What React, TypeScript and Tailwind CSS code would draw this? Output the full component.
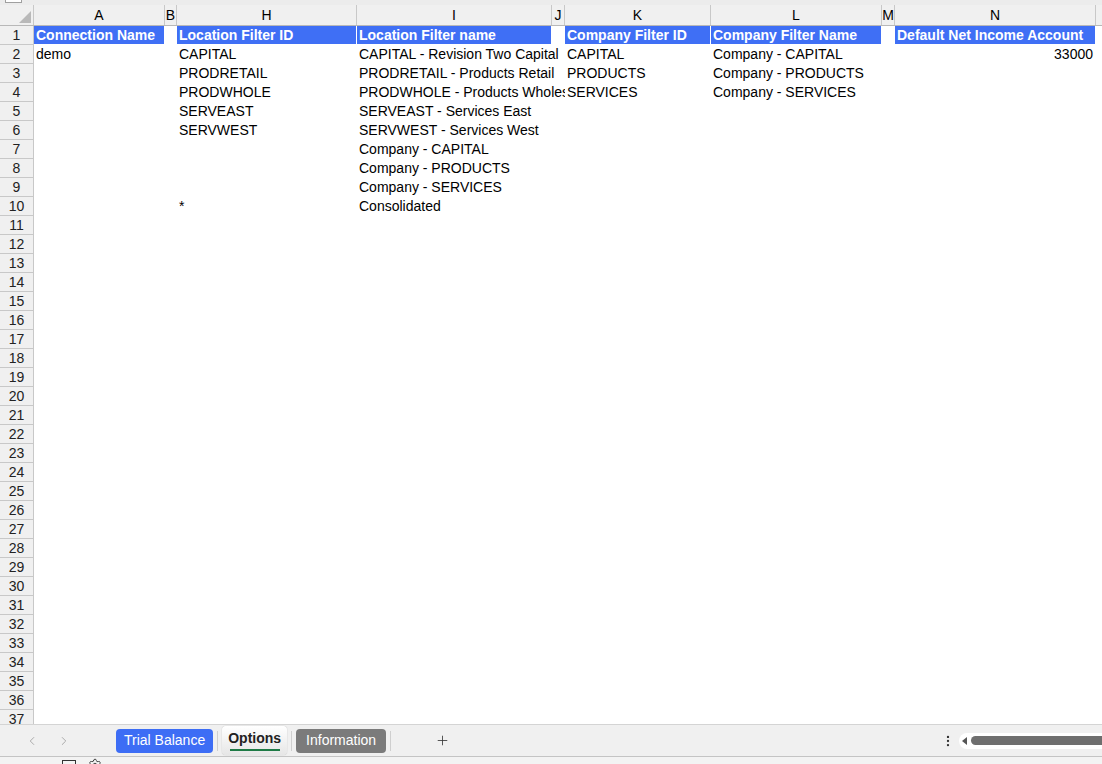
import { ChevronLeft, ChevronRight, Plus, EllipsisVertical, Settings } from 'lucide-react';

type Col = { label: string; w: string };

const cols: Col[] = [
  { label: 'A', w: 'w-[131px]' },
  { label: 'B', w: 'w-[12px]' },
  { label: 'H', w: 'w-[180px]' },
  { label: 'I', w: 'w-[195px]' },
  { label: 'J', w: 'w-[13px]' },
  { label: 'K', w: 'w-[146px]' },
  { label: 'L', w: 'w-[171px]' },
  { label: 'M', w: 'w-[13px]' },
  { label: 'N', w: 'w-[201px]' },
  { label: 'O', w: 'w-[120px]' },
];

// row 2..10 values: [A, H, I, K, L, N]
const rows: string[][] = [
  ['demo', 'CAPITAL', 'CAPITAL - Revision Two Capital', 'CAPITAL', 'Company - CAPITAL', '33000'],
  ['', 'PRODRETAIL', 'PRODRETAIL - Products Retail', 'PRODUCTS', 'Company - PRODUCTS', ''],
  ['', 'PRODWHOLE', 'PRODWHOLE - Products Wholesale', 'SERVICES', 'Company - SERVICES', ''],
  ['', 'SERVEAST', 'SERVEAST - Services East', '', '', ''],
  ['', 'SERVWEST', 'SERVWEST - Services West', '', '', ''],
  ['', '', 'Company - CAPITAL', '', '', ''],
  ['', '', 'Company - PRODUCTS', '', '', ''],
  ['', '', 'Company - SERVICES', '', '', ''],
  ['', '*', 'Consolidated', '', '', ''],
];

const emptyRows = Array.from({ length: 27 }, (_, i) => i + 11);

function RowNum({ n }: { n: number }) {
  return (
    <div className="w-[34px] shrink-0 h-full flex items-center justify-center bg-[#f0f0f0] border-r border-b border-[#c8c8c8] text-[14px] text-[#222]">
      {n}
    </div>
  );
}

function HeadCell({ text, w }: { text: string; w: string }) {
  return (
    <div className={`${w} shrink-0 h-full pr-[1px]`}>
      <div className="h-full bg-[#3f6ff5] text-white font-bold text-[14px] pl-[2px] flex items-center whitespace-nowrap overflow-hidden">
        {text}
      </div>
    </div>
  );
}

function Cell({ text, w, right }: { text: string; w: string; right?: boolean }) {
  return (
    <div
      className={`${w} shrink-0 h-full flex items-center whitespace-nowrap overflow-hidden text-[14px] text-black ${
        right ? 'justify-end pr-[3px]' : 'pl-[2px]'
      }`}
    >
      {text}
    </div>
  );
}

export default function App() {
  return (
    <div
      className="w-[1102px] h-[764px] overflow-hidden bg-white flex flex-col"
      style={{ fontFamily: '"Liberation Sans", Arial, sans-serif' }}
    >
      {/* formula area remnant */}
      <div className="h-[5px] shrink-0 bg-[#ececec] relative">
        <div className="absolute left-[5px] top-[-4px] w-[17px] h-[7px] bg-white border border-[#a0a0a0]" />
      </div>

      {/* column headers */}
      <div className="h-[21px] shrink-0 flex bg-[#f0f0f0] border-b border-[#b8b8b8]">
        <div className="w-[34px] shrink-0 h-full border-r border-[#c8c8c8] relative">
          <div className="absolute right-[2px] bottom-[2px] w-0 h-0 border-l-[12px] border-l-transparent border-b-[12px] border-b-[#b9b9b9]" />
        </div>
        {cols.map((c) => (
          <div
            key={c.label}
            className={`${c.w} shrink-0 h-full border-r border-[#c8c8c8] flex items-center justify-center text-[14px] text-black`}
          >
            {c.label}
          </div>
        ))}
      </div>

      {/* grid */}
      <div className="h-[698px] shrink-0 overflow-hidden">
        <div className="h-[19px] flex">
          <RowNum n={1} />
          <div className="flex h-full pb-[1px]">
            <HeadCell text="Connection Name" w="w-[131px]" />
            <div className="w-[12px] shrink-0" />
            <HeadCell text="Location Filter ID" w="w-[180px]" />
            <HeadCell text="Location Filter name" w="w-[195px]" />
            <div className="w-[13px] shrink-0" />
            <HeadCell text="Company Filter ID" w="w-[146px]" />
            <HeadCell text="Company Filter Name" w="w-[171px]" />
            <div className="w-[13px] shrink-0" />
            <HeadCell text="Default Net Income Account" w="w-[201px]" />
          </div>
        </div>
        {rows.map((r, i) => (
          <div key={i} className="h-[19px] flex">
            <RowNum n={i + 2} />
            <Cell text={r[0]} w="w-[131px]" />
            <div className="w-[12px] shrink-0" />
            <Cell text={r[1]} w="w-[180px]" />
            <Cell text={r[2]} w="w-[208px]" />
            <Cell text={r[3]} w="w-[146px]" />
            <Cell text={r[4]} w="w-[171px]" />
            <div className="w-[13px] shrink-0" />
            <Cell text={r[5]} w="w-[201px]" right />
          </div>
        ))}
        {emptyRows.map((n) => (
          <div key={n} className="h-[19px] flex">
            <RowNum n={n} />
          </div>
        ))}
      </div>

      {/* sheet tabs */}
      <div className="h-[33px] shrink-0 bg-[#f0f0f0] border-t border-[#d4d4d4] border-b border-b-[#c4c4c4] flex items-center text-[14px]">
        <ChevronLeft className="ml-[25px] w-[14px] h-[14px] text-[#a0a0a0]" strokeWidth={1.5} />
        <ChevronRight className="ml-[18px] w-[14px] h-[14px] text-[#a0a0a0]" strokeWidth={1.5} />
        <div className="ml-[45px] h-[24px] px-[8px] rounded-[4px] bg-[#3d6df5] text-white flex items-center">Trial Balance</div>
        <div className="mx-[4px] w-px h-[20px] bg-[#cfcfcf]" />
        <div className="h-[29px] px-[6px] rounded-[4px] bg-gradient-to-b from-white to-[#e6e6e6] shadow-[0_0_1px_rgba(0,0,0,0.35)] flex flex-col items-center justify-center">
          <span className="font-bold text-[#222] leading-[16px]">Options</span>
          <span className="mt-[3px] w-[50px] h-[2px] bg-[#1e7a45]" />
        </div>
        <div className="mx-[4px] w-px h-[20px] bg-[#cfcfcf]" />
        <div className="h-[24px] px-[10px] rounded-[4px] bg-[#7b7b7b] text-white flex items-center">Information</div>
        <div className="mx-[4px] w-px h-[20px] bg-[#cfcfcf]" />
        <Plus className="ml-[40px] w-[15px] h-[15px] text-[#333]" strokeWidth={1.3} />
        <EllipsisVertical className="ml-[491px] w-[14px] h-[14px] text-[#333]" strokeWidth={2} />
        <div className="ml-[4px] flex-1 h-[16px] bg-white rounded-l-[8px] flex items-center pl-[3px]">
          <div className="w-0 h-0 border-t-[4px] border-t-transparent border-b-[4px] border-b-transparent border-r-[5px] border-r-[#555]" />
          <div className="ml-[4px] flex-1 h-[9px] rounded-l-[5px] bg-[#6e6e6e]" />
        </div>
      </div>

      {/* status bar */}
      <div className="flex-1 bg-[#f3f3f3] relative overflow-hidden">
        <div className="absolute left-[62px] top-[3px] w-[14px] h-[10px] border border-[#333]" />
        <Settings className="absolute left-[88px] top-[1px] w-[14px] h-[14px] text-[#333]" strokeWidth={1.5} />
      </div>
    </div>
  );
}
